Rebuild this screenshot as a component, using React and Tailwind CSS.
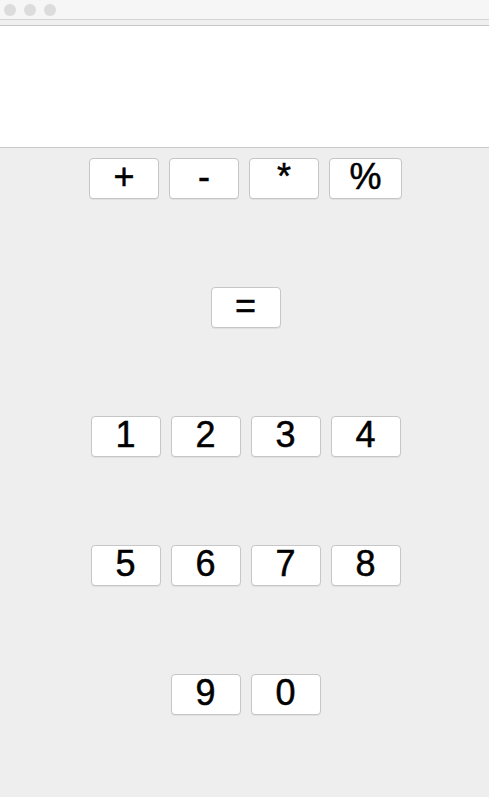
import React from 'react';

// Calculator window: title bar, display, and rows of keys
const rows = [
  ['+', '-', '*', '%'],
  ['='],
  ['1', '2', '3', '4'],
  ['5', '6', '7', '8'],
  ['9', '0'],
];

const Key = ({ label }) => (
  <button
    type="button"
    className={`h-[41px] ${label === '%' ? 'w-[73px]' : 'w-[70px]'} flex items-center justify-center bg-white border border-[#c6c6c6] rounded-[4px] shadow-[0_1px_0_rgba(0,0,0,0.06)] text-black text-[36px] leading-none pb-[3px] [-webkit-text-stroke:0.5px_black]`}
  >
    {label}
  </button>
);

const App = () => {
  return (
    <div
      className="w-[489px] h-[797px] flex flex-col bg-[#eeeeee] overflow-hidden"
      style={{ fontFamily: '"Liberation Sans", Arial, sans-serif' }}
    >
      {/* Title bar */}
      <div className="h-[20px] shrink-0 flex items-center gap-[8px] pl-[4px] bg-[#f6f6f6] border-b border-[#d4d4d4]">
        <span className="w-[12px] h-[12px] rounded-full bg-[#dcdcdc]" />
        <span className="w-[12px] h-[12px] rounded-full bg-[#dcdcdc]" />
        <span className="w-[12px] h-[12px] rounded-full bg-[#dcdcdc]" />
      </div>
      <div className="h-[6px] shrink-0 bg-[#f0f0f0] border-b border-[#c6c6c6]" />

      {/* Display */}
      <div className="h-[122px] shrink-0 bg-white border-b border-[#c8c8c8]" />

      {/* Keys */}
      <div className="flex flex-col pl-[2px]">
        {rows.map((row, i) => (
          <div key={i} className="h-[129px] pt-[10px] flex justify-center items-start gap-[10px]">
            {row.map((k) => (
              <Key key={k} label={k} />
            ))}
          </div>
        ))}
      </div>
    </div>
  );
};

export default App;
